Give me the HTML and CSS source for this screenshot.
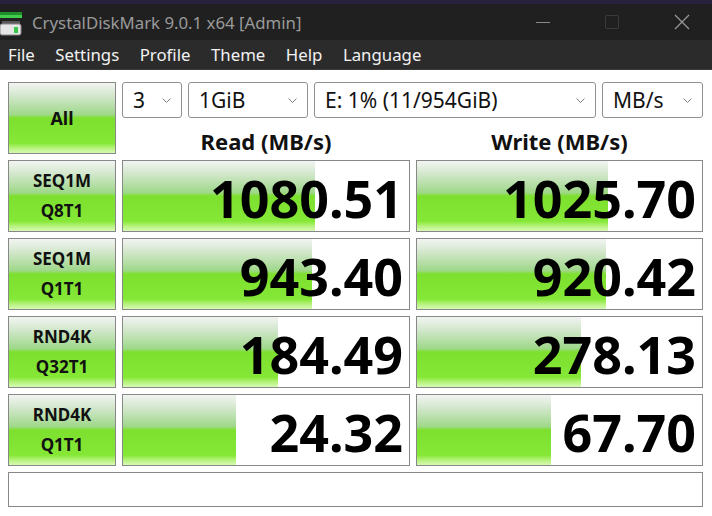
FILE: index.html
```html
<!DOCTYPE html>
<html lang="en">
<head>
    <meta charset="UTF-8">
    <link rel="stylesheet" href="styles.css">
</head>
<body>
    <div class="desktop"></div>

    <div class="titlebar">
        <svg class="app-icon" width="24" height="26" viewBox="0 0 24 26">
            <rect x="0" y="1" width="22" height="3" fill="#1f8f2c"/>
            <rect x="0" y="4" width="22" height="3" fill="#3fcf4c"/>
            <rect x="2" y="10" width="18" height="3" fill="#5a5a5a"/>
            <rect x="0" y="13" width="21" height="11" rx="2" fill="#e6e6e6" stroke="#8a8a8a"/>
            <rect x="14" y="16" width="4" height="6" fill="#39c64a"/>
        </svg>
        <span class="title">CrystalDiskMark 9.0.1 x64 [Admin]</span>
        <div class="controls">
            <svg width="16" height="16" viewBox="0 0 16 16"><path d="M1 8.5h14" stroke="#8a8a8a" stroke-width="1"/></svg>
            <svg width="16" height="16" viewBox="0 0 16 16"><rect x="1.5" y="1.5" width="13" height="13" rx="1" fill="none" stroke="#3c3c3c"/></svg>
            <svg width="18" height="18" viewBox="0 0 18 18"><path d="M2 2l14 14M16 2L2 16" stroke="#9a9a9a" stroke-width="1.2"/></svg>
        </div>
    </div>

    <div class="menubar">
        <span>File</span>
        <span>Settings</span>
        <span>Profile</span>
        <span>Theme</span>
        <span>Help</span>
        <span>Language</span>
    </div>

    <div class="main">
        <div class="btn all">All</div>

        <div class="selects">
            <div class="select sel-count">3 <svg class="chev" width="9" height="5" viewBox="0 0 9 5"><path d="M0.5 0.5l4 4 4-4" fill="none" stroke="#808080"/></svg></div>
            <div class="select sel-size">1GiB <svg class="chev" width="9" height="5" viewBox="0 0 9 5"><path d="M0.5 0.5l4 4 4-4" fill="none" stroke="#808080"/></svg></div>
            <div class="select sel-drive">E: 1% (11/954GiB) <svg class="chev" width="9" height="5" viewBox="0 0 9 5"><path d="M0.5 0.5l4 4 4-4" fill="none" stroke="#808080"/></svg></div>
            <div class="select sel-unit">MB/s <svg class="chev" width="9" height="5" viewBox="0 0 9 5"><path d="M0.5 0.5l4 4 4-4" fill="none" stroke="#808080"/></svg></div>
        </div>

        <div class="head">Read (MB/s)</div>
        <div class="head">Write (MB/s)</div>

        <div class="btn label">SEQ1M<br>Q8T1</div>
        <div class="result" style="--fill: 192px">1080.51</div>
        <div class="result" style="--fill: 191px">1025.70</div>

        <div class="btn label">SEQ1M<br>Q1T1</div>
        <div class="result" style="--fill: 189px">943.40</div>
        <div class="result" style="--fill: 189px">920.42</div>

        <div class="btn label">RND4K<br>Q32T1</div>
        <div class="result" style="--fill: 155px">184.49</div>
        <div class="result" style="--fill: 164px">278.13</div>

        <div class="btn label">RND4K<br>Q1T1</div>
        <div class="result" style="--fill: 113px">24.32</div>
        <div class="result" style="--fill: 134px">67.70</div>

        <div class="comment"></div>
    </div>
</body>
</html>
```

FILE: styles.css
```css
body {
    margin: 0;
    background: #fff;
    font-family: "Noto Sans", "Open Sans", sans-serif;
}

.desktop {
    height: 4px;
    background: #29223f;
}

/* title + menu */
.titlebar {
    height: 36px;
    background: #202020;
    display: flex;
    align-items: center;
}
.app-icon { margin: 4px 8px 0 0; }
.title {
    color: #9a9a9a;
    font-size: 16.8px;
}
.controls {
    margin-left: auto;
    display: flex;
    align-items: center;
    gap: 53px;
    padding-right: 21px;
}

.menubar {
    height: 30px;
    background: #2b2b2b;
    border-bottom: 1px solid #3a3a3a;
    box-sizing: border-box;
    display: flex;
    align-items: center;
    gap: 20.5px;
    padding-left: 8px;
    color: #f2f2f2;
    font-size: 16.8px;
}

/* benchmark grid */
.main {
    display: grid;
    grid-template-columns: 108px 288px 287px;
    grid-template-rows: 36px 30px repeat(4, 72px) 35px;
    gap: 6px;
    padding: 12px 8px;
}

.btn {
    box-sizing: border-box;
    border: 1px solid #888;
    background: linear-gradient(to bottom,
        #f2f4f2 0%, #cfe6c8 20%, #9fd88a 45%, #7ee02e 50%,
        #86e836 86%, #b6f27c 93%, #d6fab4 100%);
    display: flex;
    align-items: center;
    justify-content: center;
    text-align: center;
    font-weight: bold;
    color: #111;
}
.all {
    grid-row: span 2;
    font-size: 18px;
}
.label {
    font-size: 17px;
    line-height: 30px;
}

.selects {
    grid-column: 2 / 4;
    display: flex;
    gap: 6px;
}
.select {
    box-sizing: border-box;
    height: 36px;
    border: 1px solid #8f8f8f;
    border-radius: 3px;
    display: flex;
    align-items: center;
    padding: 0 10px;
    font-size: 21px;
    color: #111;
}
.select .chev { margin-left: auto; }
.sel-count { width: 60px; }
.sel-size { width: 120px; }
.sel-drive { width: 282px; }
.sel-unit { width: 101px; }

.head {
    text-align: center;
    font-size: 22px;
    font-weight: bold;
    line-height: 34px;
    color: #111;
}

.result {
    box-sizing: border-box;
    border: 1px solid #888;
    background: linear-gradient(to bottom,
        #f2f4f2 0%, #cfe6c8 20%, #9fd88a 45%, #7ee02e 50%,
        #86e836 86%, #b6f27c 93%, #d6fab4 100%) no-repeat;
    background-size: var(--fill) 100%;
    display: flex;
    align-items: center;
    justify-content: flex-end;
    padding: 2px 6px 0 0;
    font-size: 52px;
    font-weight: bold;
    color: #000;
}

.comment {
    grid-column: 1 / 4;
    border: 1px solid #888;
}
```
